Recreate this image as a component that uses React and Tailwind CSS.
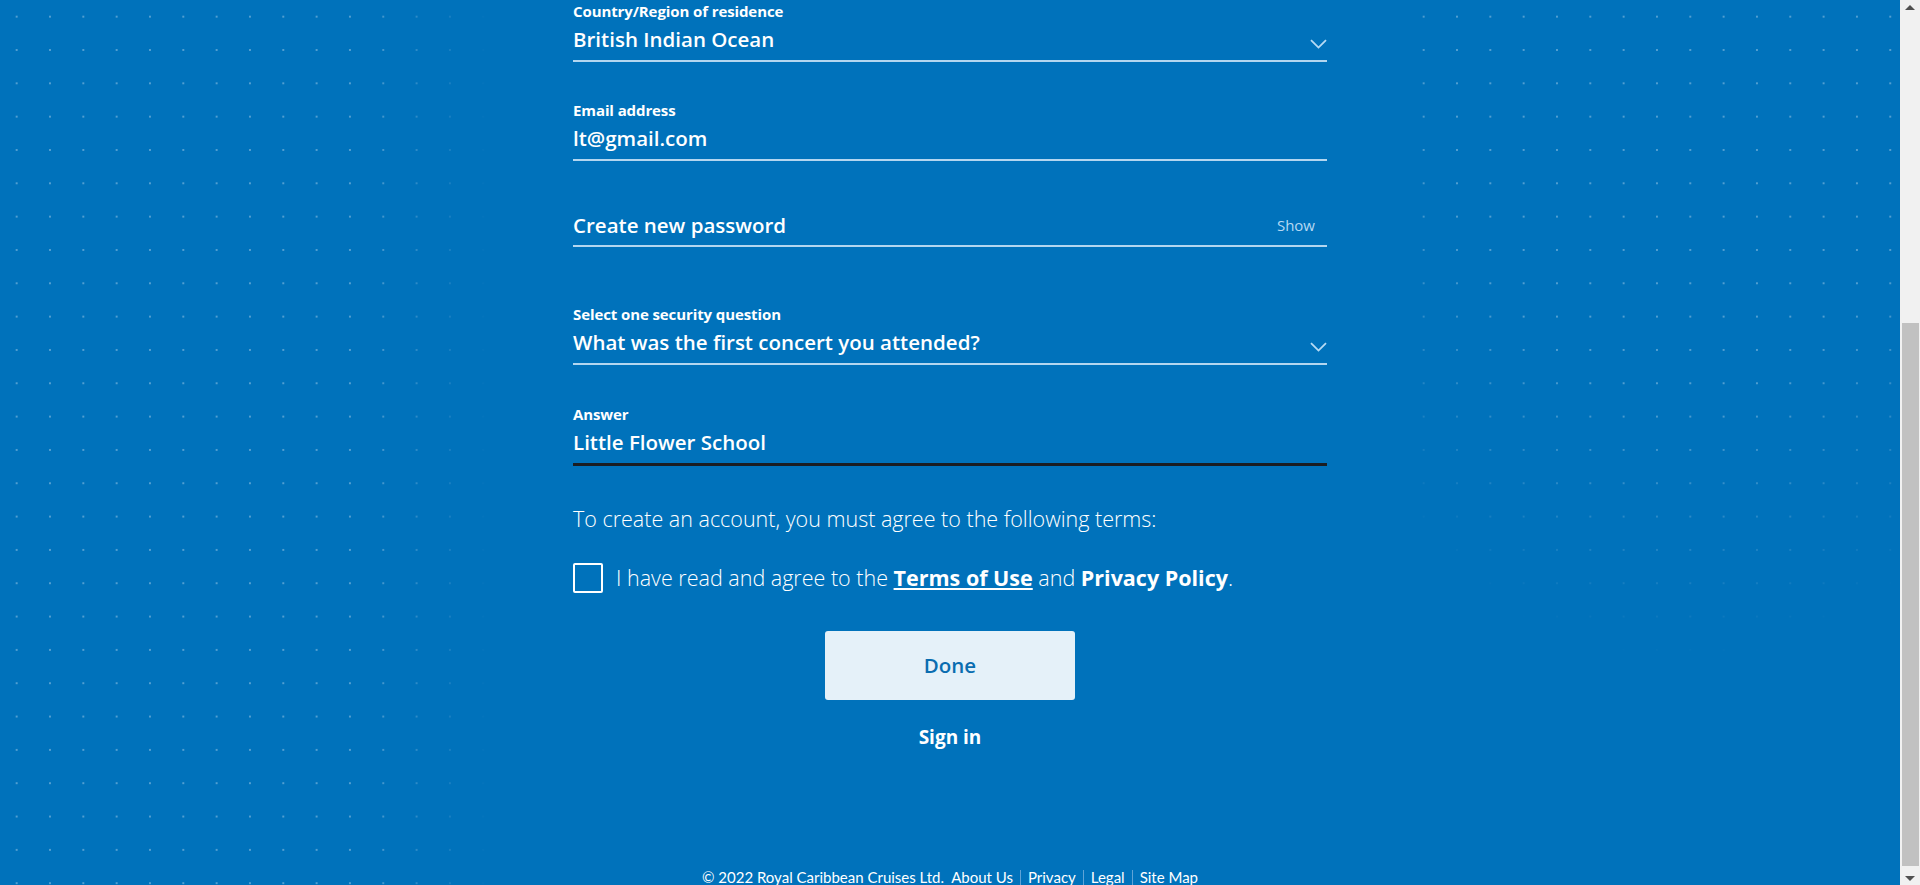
import { useState } from 'react';

const font = { fontFamily: '"Open Sans", Lato, Arial, sans-serif' };

const Chevron = () => (
  <svg width="17" height="10" viewBox="0 0 17 10" fill="none" className="shrink-0">
    <path d="M1 1.2 L8.5 8.6 L16 1.2" stroke="#b7dbf4" strokeWidth="1.8" />
  </svg>
);

const Field = ({ label, value, select, dark, className = '' }) => (
  <div className={className}>
    <div className="text-[15px] leading-[20px] font-bold tracking-[-0.1px] text-white">{label}</div>
    <div
      className={`mt-1 flex items-end justify-between pb-[7px] ${
        dark ? 'border-b-[3px] border-[#1b1d22]' : 'border-b-2 border-[#b3d6f0]'
      }`}
    >
      <span className="text-[20.5px] leading-[28px] font-semibold text-white">{value}</span>
      {select && (
        <span className="mb-[4px]">
          <Chevron />
        </span>
      )}
    </div>
  </div>
);

const Sep = () => <span className="mx-[7px] inline-block h-[15px] w-px bg-[#5fa3d6] align-[-2px]" />;

export default function App() {
  const [agreed, setAgreed] = useState(false);

  return (
    <div className="flex h-[885px] w-full overflow-hidden" style={font}>
      <div className="relative flex-1 bg-[#0072bb]">
        {/* dotted decoration */}
        <div className="pointer-events-none absolute left-0 top-0 h-full w-[500px] bg-[radial-gradient(circle,rgba(255,255,255,0.32)_1px,transparent_1.4px)] bg-[length:33.333px_33.333px] [mask-image:linear-gradient(to_right,black_72%,transparent_98%)]" />
        <div className="pointer-events-none absolute left-[1420px] top-0 h-[860px] w-[480px] bg-[radial-gradient(circle,rgba(255,255,255,0.32)_1px,transparent_1.4px)] bg-[length:33.333px_33.333px] bg-[position:-13px_0] [mask-image:radial-gradient(ellipse_115%_90%_at_55%_5%,black_45%,transparent_80%)]" />

        <div className="relative mx-auto flex w-[754px] flex-col">
          <Field className="mt-px" label="Country/Region of residence" value="British Indian Ocean" select />
          <Field className="mt-[38px]" label="Email address" value="lt@gmail.com" />

          <div className="mt-[50px] flex items-center justify-between border-b-2 border-[#b3d6f0] pb-[6px]">
            <span className="text-[20.5px] leading-[28px] font-semibold text-white">Create new password</span>
            <button type="button" className="mr-[12px] text-[15px] text-[#b5d9f3]">
              Show
            </button>
          </div>

          <Field
            className="mt-[57px]"
            label="Select one security question"
            value="What was the first concert you attended?"
            select
          />
          <Field className="mt-[39px]" label="Answer" value="Little Flower School" dark />

          <p className="mt-[39px] text-[21.5px] leading-[28px] font-light text-white">
            To create an account, you must agree to the following terms:
          </p>

          <label className="mt-[30px] flex items-center gap-[13px] text-[21.5px] leading-[30px] font-light text-white">
            <button
              type="button"
              onClick={() => setAgreed(!agreed)}
              className="h-[30px] w-[30px] shrink-0 rounded-[2px] border-2 border-white"
            >
              {agreed && <span className="text-sm">✓</span>}
            </button>
            <span>
              I have read and agree to the <a className="font-bold underline underline-offset-2">Terms of Use</a> and{' '}
              <a className="font-bold">Privacy Policy</a>.
            </span>
          </label>

          <button
            type="button"
            className="mx-auto mt-[38px] h-[69px] w-[250px] rounded-[3px] bg-[#e5f1f9] text-[20.5px] font-semibold text-[#0a6db0]"
          >
            Done
          </button>

          <a className="mt-[25px] text-center text-[19px] leading-[24px] font-bold text-white">Sign in</a>

          <div className="mt-[118px] text-center text-[15px] leading-[20px] text-white" style={{ fontFamily: 'Lato, Arial, sans-serif' }}>
            © 2022 Royal Caribbean Cruises Ltd.&nbsp; About Us
            <Sep />
            Privacy
            <Sep />
            Legal
            <Sep />
            Site Map
          </div>
        </div>
      </div>

      {/* scrollbar */}
      <div className="flex w-[20px] shrink-0 flex-col items-center bg-[#f1f1f1]">
        <div className="mt-[5px] h-0 w-0 border-x-[5px] border-b-[5px] border-x-transparent border-b-[#505050]" />
        <div className="mt-[313px] h-[543px] w-[17px] bg-[#c1c1c1]" />
        <div className="mt-[10px] h-0 w-0 border-x-[5px] border-t-[5px] border-x-transparent border-t-[#505050]" />
      </div>
    </div>
  );
}
